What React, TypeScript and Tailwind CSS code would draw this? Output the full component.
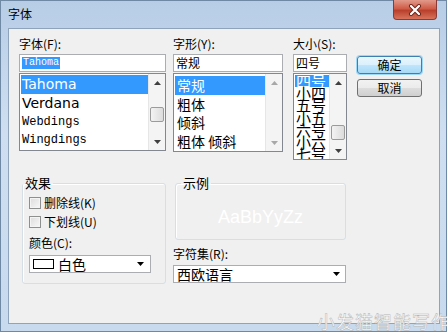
import React from "react";

const fonts = ["Tahoma", "Verdana", "Webdings", "Wingdings"];
const styles = ["常规", "粗体", "倾斜", "粗体 倾斜"];
const sizes = ["四号", "小四", "五号", "小五", "六号", "小六", "七号"];

function Tri({ up, color = "#3c3c3c" }: { up?: boolean; color?: string }) {
  return (
    <svg width="7" height="4" viewBox="0 0 7 4">
      <polygon points={up ? "3.5,0 7,4 0,4" : "0,0 7,0 3.5,4"} fill={color} />
    </svg>
  );
}

function ScrollBar({ thumb, thumbTop, arrow }: { thumb: boolean; thumbTop?: string; arrow: string }) {
  return (
    <div className="w-[17px] h-full flex flex-col bg-[#f4f4f4] border-l border-[#e6e6e6]">
      <div className="h-[17px] flex items-center justify-center">
        <Tri up color={arrow} />
      </div>
      <div className="flex-1">
        {thumb && (
          <div className={`${thumbTop} mx-[1px] h-[15px] rounded-[2px] border border-[#9b9b9b] bg-[linear-gradient(90deg,#f3f3f3,#dcdcdc)]`} />
        )}
      </div>
      <div className="h-[17px] flex items-center justify-center">
        <Tri color={arrow} />
      </div>
    </div>
  );
}

function Field({ children }: { children: React.ReactNode }) {
  return (
    <div className="h-[18px] mt-[2px] border border-[#abadb3] bg-white flex items-center px-[2px]">{children}</div>
  );
}

function CheckRow({ label }: { label: string }) {
  return (
    <div className="h-[16px] flex items-center">
      <span className="w-[12px] h-[12px] border border-[#8e8f8f] bg-[linear-gradient(135deg,#dcdcdc,#f8f8f8)] shadow-[inset_0_0_0_1px_#f4f4f4]" />
      <span className="ml-[3px] leading-[16px]">{label}</span>
    </div>
  );
}

export default function App() {
  return (
    <div className="relative w-[447px] h-[332px] overflow-hidden flex flex-col bg-[linear-gradient(180deg,#b7cde6_0%,#cfdff1_40%,#c7daee_100%)] shadow-[inset_0_0_0_1px_#6f88a3] font-['Noto_Sans_CJK_SC',sans-serif] text-[12px] text-black">
      {/* title bar */}
      <div className="h-[28px] flex items-start justify-between pl-[8px] pr-[10px]">
        <span className="mt-[6px] leading-[16px]">字体</span>
        <div className="w-[44px] h-[20px] rounded-b-[4px] border border-t-0 border-[#8b3b35] bg-[linear-gradient(180deg,#e29a8a_0%,#cf5d48_45%,#b8402c_55%,#d9735c_100%)] flex items-center justify-center">
          <svg width="14" height="12" viewBox="0 0 14 12">
            <path d="M3 2 L11 10 M11 2 L3 10" stroke="#6b2418" strokeWidth="4" strokeLinecap="round" />
            <path d="M3 2 L11 10 M11 2 L3 10" stroke="#ffffff" strokeWidth="2.2" strokeLinecap="round" />
          </svg>
        </div>
      </div>

      {/* client panel */}
      <div className="ml-[8px] mr-[7px] mb-[8px] flex-1 bg-[#f0f0f0] border border-[#8fa4ba]">
        <div className="flex items-start pl-[10px] pt-[7px]">
          {/* font family */}
          <div className="w-[147px]">
            <div className="h-[16px] leading-[16px]">字体(F):</div>
            <Field>
              <span className="bg-[#3399ff] text-white font-['Liberation_Mono',monospace] text-[10px] leading-[12px] px-[1px]">Tahoma</span>
            </Field>
            <div className="h-[78px] mt-[1px] border border-[#828790] bg-white flex overflow-hidden">
              <div className="flex-1 pt-[1px] pl-[1px]">
                {fonts.map((f, i) => (
                  <div
                    key={f}
                    className={`h-[18.7px] flex items-center px-[1px] ${i === 0 ? "bg-[#3399ff] text-white" : ""} ${
                      i < 2 ? "font-['DejaVu_Sans','Verdana',sans-serif] text-[14px]" : "font-['Liberation_Mono',monospace] text-[12px]"
                    }`}
                  >
                    {f}
                  </div>
                ))}
              </div>
              <ScrollBar thumb thumbTop="mt-[16px]" arrow="#404040" />
            </div>
          </div>

          {/* font style */}
          <div className="w-[110px] ml-[7px]">
            <div className="h-[16px] leading-[16px]">字形(Y):</div>
            <Field>
              <span className="leading-[14px]">常规</span>
            </Field>
            <div className="h-[79px] mt-[1px] border border-[#828790] bg-white flex overflow-hidden">
              <div className="flex-1 pt-[2px] pl-[1px]">
                {styles.map((s, i) => (
                  <div
                    key={s}
                    className={`h-[18.7px] flex items-center px-[2px] text-[14px] whitespace-pre ${i === 0 ? "bg-[#3399ff] text-white" : ""}`}
                  >
                    {s}
                  </div>
                ))}
              </div>
              <ScrollBar thumb={false} arrow="#a8a8a8" />
            </div>
          </div>

          {/* size */}
          <div className="w-[54px] ml-[10px]">
            <div className="h-[16px] leading-[16px] whitespace-nowrap">大小(S):</div>
            <Field>
              <span className="leading-[14px]">四号</span>
            </Field>
            <div className="h-[87px] mt-[1px] border border-[#828790] bg-white flex overflow-hidden">
              <div className="flex-1 pt-[1px] pl-[1px] min-w-0">
                {sizes.map((s, i) => (
                  <div
                    key={s}
                    className={`h-[12.2px] leading-[12px] text-[15px] px-[1px] whitespace-nowrap ${i === 0 ? "bg-[#3399ff] text-white" : ""}`}
                  >
                    {s}
                  </div>
                ))}
              </div>
              <ScrollBar thumb thumbTop="mt-[34px]" arrow="#404040" />
            </div>
          </div>

          {/* buttons */}
          <div className="w-[65px] ml-[10px] mt-[20px] flex flex-col gap-[5px]">
            <button className="h-[18px] rounded-[3px] border border-[#3c7fb1] bg-[linear-gradient(180deg,#eaf6fd_0%,#d9f0fc_50%,#bee6fd_51%,#a7d9f5_100%)] shadow-[0_0_0_1px_#9ed8f7] text-[12px] leading-[16px]">
              确定
            </button>
            <button className="h-[18px] rounded-[3px] border border-[#707070] bg-[linear-gradient(180deg,#f2f2f2_0%,#ebebeb_50%,#dddddd_51%,#cfcfcf_100%)] text-[12px] leading-[16px]">
              取消
            </button>
          </div>
        </div>

        <div className="flex items-start pl-[13px] mt-[15px]">
          {/* effects group */}
          <fieldset className="w-[144px] border border-[#d5dfe5] rounded-[3px] shadow-[inset_1px_1px_0_#fff]">
            <legend className="ml-[0px] px-[2px] leading-[16px] text-[13px]">效果</legend>
            <div className="pl-[6px] pr-[14px] pt-[4px] pb-[10px]">
              <CheckRow label="删除线(K)" />
              <div className="mt-[3px]">
                <CheckRow label="下划线(U)" />
              </div>
              <div className="h-[16px] leading-[16px] mt-[5px]">颜色(C):</div>
              <div className="h-[18px] mt-[4px] border border-[#abadb3] bg-white flex items-center pl-[3px] pr-[6px]">
                <span className="w-[21px] h-[10px] border border-black bg-white" />
                <span className="ml-[4px] text-[14px] leading-[16px] flex-1">白色</span>
                <Tri color="#000" />
              </div>
            </div>
          </fieldset>

          {/* right column */}
          <div className="w-[173px] ml-[7px]">
            <fieldset className="ml-[2px] w-[171px] border border-[#d5dfe5] rounded-[3px] shadow-[inset_1px_1px_0_#fff]">
              <legend className="ml-[5px] px-[2px] leading-[16px] text-[13px]">示例</legend>
              <div className="h-[48px] flex items-center justify-center">
                <span className="text-white text-[18px] leading-[20px] mt-[4px] font-['Liberation_Sans',sans-serif]">AaBbYyZz</span>
              </div>
            </fieldset>
            <div className="h-[16px] leading-[16px] mt-[6px]">字符集(R):</div>
            <div className="h-[18px] mt-[3px] border border-[#abadb3] bg-white flex items-center pl-[3px] pr-[5px]">
              <span className="flex-1 text-[14px] leading-[16px]">西欧语言</span>
              <Tri color="#000" />
            </div>
          </div>
        </div>
      </div>

      {/* watermark */}
      <div className="absolute left-[317px] bottom-[1px] text-[18px] leading-[20px] tracking-[1px] text-white [-webkit-text-stroke:0.5px_#b4b4b4] whitespace-nowrap">
        小发猫智能写作
      </div>
    </div>
  );
}
